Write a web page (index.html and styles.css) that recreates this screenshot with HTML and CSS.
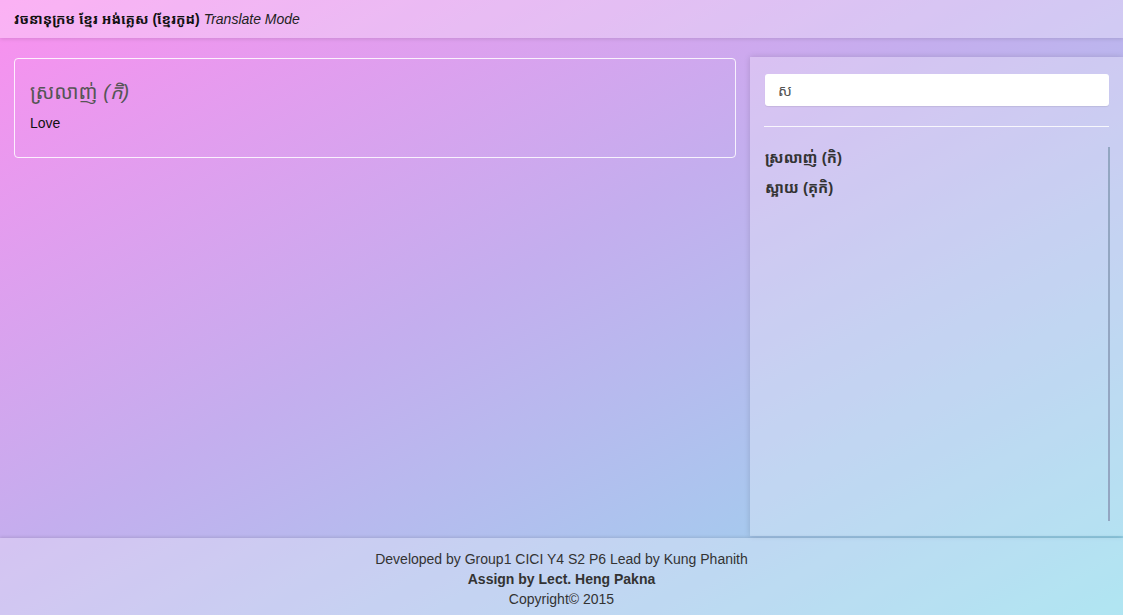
FILE: index.html
```html
<!DOCTYPE html>
<html>
<head>
<meta charset="utf-8">
<link rel="stylesheet" href="styles.css">
</head>
<body>
<div class="page">
  <header class="topbar">
    <span class="brand">វចនានុក្រម ខ្មែរ អង់គ្លេស (ខ្មែរកូដ)</span>
    <span class="mode">Translate Mode</span>
  </header>
  <main class="main">
    <section class="left">
      <div class="card">
        <div class="word">ស្រលាញ់ <em>(កិ)</em></div>
        <div class="meaning">Love</div>
      </div>
    </section>
    <aside class="panel">
      <div class="search">ស</div>
      <div class="rule"></div>
      <ul class="results">
        <li>ស្រលាញ់ (កិ)</li>
        <li>ស្អាយ (គុកិ)</li>
      </ul>
    </aside>
  </main>
  <footer class="footer">
    <div>Developed by Group1 CICI Y4 S2 P6 Lead by Kung Phanith</div>
    <div class="bold">Assign by Lect. Heng Pakna</div>
    <div>Copyright© 2015</div>
  </footer>
</div>
</body>
</html>
```
FILE: styles.css
```css
* { box-sizing: border-box; }
html, body { margin: 0; padding: 0; height: 100%; }
body {
  font-family: "Liberation Sans", Arial, "Noto Sans Khmer", "Khmer OS", sans-serif;
  font-size: 14px;
  color: #333;
  background: linear-gradient(to bottom right, #fa90ef 0%, #c4aeee 45%, #92dcee 100%);
  overflow: hidden;
}
.page {
  height: 615px;
  display: flex;
  flex-direction: column;
}
.topbar {
  height: 38px;
  flex: none;
  background: rgba(255,255,255,0.3);
  box-shadow: 0 1px 4px rgba(0,0,0,0.12);
  padding: 9px 14px 0;
  position: relative;
  z-index: 2;
}
.brand {
  font-weight: bold;
  color: #111;
  font-size: 14px;
}
.mode {
  font-style: italic;
  color: #222;
  font-size: 14px;
}
.main {
  flex: 1;
  display: flex;
  padding-top: 19px;
  min-height: 0;
}
.left {
  width: 736px;
  padding: 1px 0 0 14px;
}
.card {
  border: 1px solid rgba(255,255,255,0.85);
  border-radius: 4px;
  height: 100px;
  padding: 19px 15px;
}
.word {
  font-size: 20px;
  color: #555;
  line-height: 28px;
}
.word em { font-style: italic; }
.meaning {
  margin-top: 9px;
  color: #111;
  font-size: 14px;
}
.panel {
  margin-left: 14px;
  flex: 1;
  height: 479px;
  background: rgba(255,255,255,0.28);
  box-shadow: 0 0 6px rgba(0,0,0,0.15);
  padding: 17px 14px 15px 15px;
  display: flex;
  flex-direction: column;
}
.search {
  height: 32px;
  background: #fff;
  border-radius: 3px;
  padding: 6px 13px;
  color: #555;
  font-size: 15px;
  box-shadow: 0 1px 1px rgba(0,0,0,0.08);
}
.rule {
  height: 1px;
  background: rgba(255,255,255,0.85);
  margin: 20px 0 20px -1px;
}
.results {
  list-style: none;
  margin: 0;
  padding: 0;
  flex: 1;
  border-right: 2px solid #93a6c2;
  margin-right: -1px;
  margin-bottom: 0;
}
.results li {
  font-size: 15px;
  font-weight: bold;
  color: #333;
  line-height: 30px;
}
.results li:first-child { margin-top: -4px; }
.footer {
  flex: none;
  height: 77px;
  background: rgba(255,255,255,0.28);
  box-shadow: 0 -1px 3px rgba(0,0,0,0.12);
  text-align: center;
  padding-top: 11px;
  line-height: 20px;
  color: #333;
  font-size: 14px;
}
.footer .bold { font-weight: bold; }
```
